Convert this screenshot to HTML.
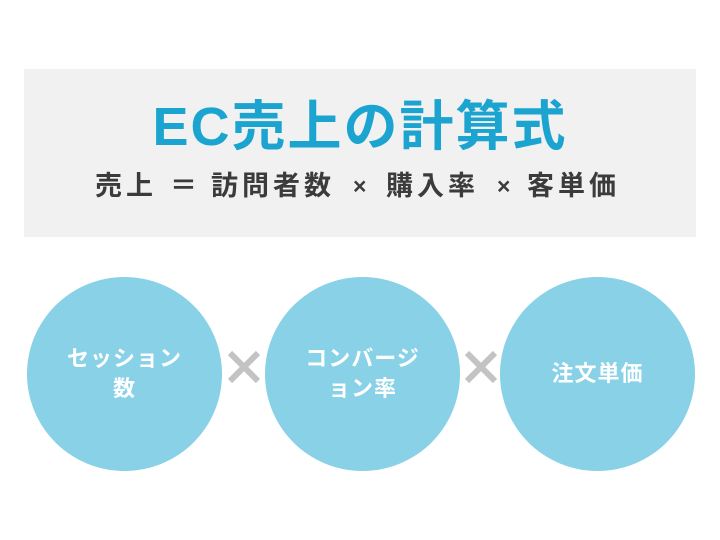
<!DOCTYPE html>
<html><head><meta charset="utf-8"><style>
body{margin:0;width:720px;height:540px;background:#fff;position:relative;overflow:hidden;font-family:"Liberation Sans","Noto Sans CJK JP",sans-serif;}
.box{position:absolute;left:24px;top:69px;width:672px;height:168px;background:#f1f1f1;}
.t{position:absolute;top:92px;left:0;width:720px;text-align:center;font-size:54px;font-weight:bold;color:#1ba4d0;letter-spacing:2px;line-height:70px;}
.s{position:absolute;top:169px;font-size:27px;font-weight:bold;color:#3b3b3b;line-height:34px;white-space:nowrap;letter-spacing:4px;}
.c{position:absolute;top:277px;width:195px;height:194px;border-radius:50%;background:#88d1e6;color:#fff;font-weight:bold;font-size:22px;line-height:30px;display:flex;align-items:center;justify-content:center;text-align:center;letter-spacing:1px;}
.x{position:absolute;top:349px;width:36px;height:36px;}
</style></head><body>
<div class="box"></div>
<div class="t">EC売上の計算式</div>
<div class="s" style="left:95px">売上</div>
<div class="s" style="left:170px">＝</div>
<div class="s" style="left:211px">訪問者数</div>
<div class="s" style="left:353px;font-size:23px">×</div>
<div class="s" style="left:386px">購入率</div>
<div class="s" style="left:497px;font-size:23px">×</div>
<div class="s" style="left:527px">客単価</div>
<div class="c" style="left:27px">セッション<br>数</div>
<div class="c" style="left:265px">コンバージ<br>ョン率</div>
<div class="c" style="left:500px">注文単価</div>
<svg class="x" style="left:226px" viewBox="0 0 36 36"><path d="M4 4L32 32M32 4L4 32" stroke="#c3c3c3" stroke-width="6"/></svg>
<svg class="x" style="left:463px" viewBox="0 0 36 36"><path d="M4 4L32 32M32 4L4 32" stroke="#c3c3c3" stroke-width="6"/></svg>
</body></html>
